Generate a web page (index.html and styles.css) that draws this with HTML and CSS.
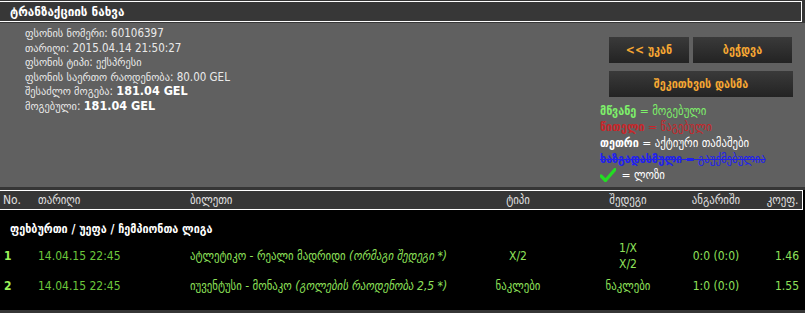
FILE: index.html
```html
<!DOCTYPE html>
<html lang="ka">
<head>
  <meta charset="UTF-8">
  <meta name="viewport" content="width=device-width, initial-scale=1.0">
  <title>ტრანზაქციის ნახვა</title>
  <link rel="stylesheet" href="styles.css">
</head>
<body>
  <div class="title-bar">
    <h1>ტრანზაქციის ნახვა</h1>
  </div>

  <!-- Bet details -->
  <div class="details">
    <ul class="info">
      <li>ფსონის ნომერი: 60106397</li>
      <li>თარიღი: 2015.04.14 21:50:27</li>
      <li>ფსონის ტიპი: ექსპრესი</li>
      <li>ფსონის საერთო რაოდენობა: 80.00 GEL</li>
      <li>შესაძლო მოგება: <b>181.04 GEL</b></li>
      <li>მოგებული: <b>181.04 GEL</b></li>
    </ul>

    <div class="side">
      <div class="buttons">
        <button class="btn btn-back">&lt;&lt; უკან</button>
        <button class="btn btn-print">ბეჭდვა</button>
        <button class="btn btn-wide">შეკითხვის დასმა</button>
      </div>
      <ul class="legend">
        <li class="won"><b>მწვანე</b> = მოგებული</li>
        <li class="lost"><b>წითელი</b> = წაგებული</li>
        <li class="active"><b>თეთრი</b> = აქტიური თამაშები</li>
        <li class="cancelled"><b>ხაზგადასმული</b> = გაუქმებულია</li>
        <li class="active">
          <svg class="check" width="16" height="14" viewBox="0 0 16 14">
            <path d="M1 8 L5.5 12.5 L15 1.5" fill="none" stroke="#22dd22" stroke-width="3.2" stroke-linecap="round" stroke-linejoin="round"/>
          </svg>
          = ლოზი
        </li>
      </ul>
    </div>
  </div>

  <!-- Events -->
  <div class="events">
    <table>
      <colgroup>
        <col class="c-no">
        <col class="c-date">
        <col class="c-ticket">
        <col class="c-type">
        <col class="c-result">
        <col class="c-score">
        <col class="c-odds">
      </colgroup>
      <thead>
        <tr>
          <th>No.</th>
          <th>თარიღი</th>
          <th>ბილეთი</th>
          <th class="mid">ტიპი</th>
          <th class="mid">შედეგი</th>
          <th class="mid">ანგარიში</th>
          <th class="end">კოეფ.</th>
        </tr>
      </thead>
      <tbody>
        <tr class="group">
          <td colspan="7">ფეხბურთი / უეფა / ჩემპიონთა ლიგა</td>
        </tr>
        <tr class="row">
          <td class="num">1</td>
          <td>14.04.15 22:45</td>
          <td>ატლეტიკო - რეალი მადრიდი <i>(ორმაგი შედეგი *)</i></td>
          <td class="mid">X/2</td>
          <td class="mid">1/X<br>X/2</td>
          <td class="mid">0:0 (0:0)</td>
          <td class="end">1.46</td>
        </tr>
        <tr class="row">
          <td class="num">2</td>
          <td>14.04.15 22:45</td>
          <td>იუვენტუსი - მონაკო <i>(გოლების რაოდენობა 2,5 *)</i></td>
          <td class="mid">ნაკლები</td>
          <td class="mid">ნაკლები</td>
          <td class="mid">1:0 (0:0)</td>
          <td class="end">1.55</td>
        </tr>
      </tbody>
    </table>
  </div>
</body>
</html>
```

FILE: styles.css
```css
body {
  margin: 0;
  padding: 1px 0 0;
  background-color: #363636;
  font-family: "Liberation Sans Narrow", "DejaVu Sans Condensed", "DejaVu Sans", sans-serif;
  font-size: 12px;
  color: #e6e6e6;
}
.title-bar {
  width: 801px;
  height: 19px;
  border: 1px solid #fff;
  border-left: none;
  background-color: #373737;
}
.title-bar h1 {
  margin: 0;
  padding-left: 10px;
  font-size: 13px;
  line-height: 19px;
  font-weight: bold;
  color: #fff;
}
.details {
  display: flex;
  justify-content: space-between;
  height: 164px;
  margin-top: 1px;
  background-color: #606060;
}
.info {
  list-style: none;
  margin: 0;
  padding: 3px 0 0 25px;
  font-size: 11.5px;
}
.info li {
  line-height: 14.6px;
  color: #eaeaea;
}
.info b {
  color: #fff;
  font-size: 12.5px;
}
.side {
  width: 205px;
  padding-top: 14px;
}
.buttons {
  display: flex;
  flex-wrap: wrap;
  gap: 8px 4px;
  width: 185px;
  margin-left: 9px;
}
.btn {
  height: 26px;
  padding: 0;
  border: none;
  background: linear-gradient(#3a3a3a, #232323);
  color: #f5a733;
  font-family: "DejaVu Sans Condensed", "DejaVu Sans", sans-serif;
  font-size: 12px;
  font-weight: bold;
  cursor: pointer;
}
.btn-back {
  width: 80px;
}
.btn-print {
  width: 99px;
}
.btn-wide {
  width: 184px;
}
.legend {
  list-style: none;
  margin: 6px 0 0;
  padding: 0;
  font-family: "DejaVu Sans Condensed", "DejaVu Sans", sans-serif;
  font-size: 12px;
}
.legend li {
  height: 16px;
  line-height: 16px;
  white-space: nowrap;
}
.legend .won {
  color: #7ef06a;
}
.legend .lost {
  color: #c8262a;
}
.legend .active {
  color: #fff;
}
.legend .cancelled {
  color: #2020f0;
  text-decoration: line-through;
}
.check {
  vertical-align: -3px;
  margin-right: 2px;
}
.events {
  margin-top: 3px;
  padding-bottom: 10px;
  background-color: #000;
}
table {
  width: 802px;
  border-collapse: collapse;
  table-layout: fixed;
}
.c-no { width: 35px; }
.c-date { width: 152px; }
.c-ticket { width: 279px; }
.c-type { width: 104px; }
.c-result { width: 116px; }
.c-score { width: 60px; }
.c-odds { width: 56px; }
thead tr {
  background-color: #363636;
  border-top: 1px solid #fff;
  border-bottom: 1px solid #fff;
  border-right: 1px solid #fff;
}
th {
  height: 18px;
  padding: 0 3px;
  text-align: left;
  font-weight: normal;
  color: #e0e0e0;
}
.mid {
  text-align: center;
}
.end {
  text-align: right;
}
.group td {
  padding: 12px 10px 4px;
  line-height: 14px;
  font-weight: bold;
  color: #fff;
}
.row td {
  padding: 0 3px;
  line-height: 16px;
  color: #8fe25a;
}
.row:nth-child(2) td {
  height: 32px;
}
.row:nth-child(3) td {
  height: 28px;
}
.row .num {
  padding-left: 4px;
  font-weight: bold;
  color: #9cf25a;
}
.row td:nth-child(2) {
  color: #6cc83c;
}
```
